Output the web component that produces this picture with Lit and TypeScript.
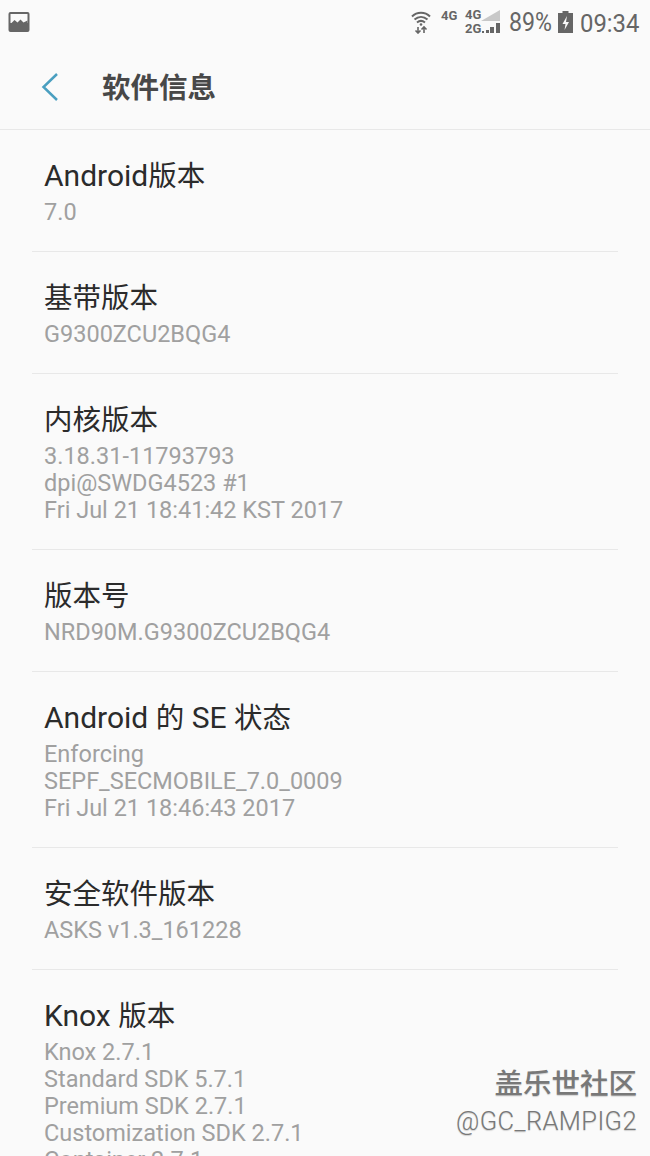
import { LitElement, html, css } from "lit";
import { customElement } from "lit/decorators.js";

const rows: [string, string[]][] = [
  ["Android版本", ["7.0"]],
  ["基带版本", ["G9300ZCU2BQG4"]],
  ["内核版本", ["3.18.31-11793793", "dpi@SWDG4523 #1", "Fri Jul 21 18:41:42 KST 2017"]],
  ["版本号", ["NRD90M.G9300ZCU2BQG4"]],
  ["Android 的 SE 状态", ["Enforcing", "SEPF_SECMOBILE_7.0_0009", "Fri Jul 21 18:46:43 2017"]],
  ["安全软件版本", ["ASKS v1.3_161228"]],
  ["Knox 版本", ["Knox 2.7.1", "Standard SDK 5.7.1", "Premium SDK 2.7.1", "Customization SDK 2.7.1", "Container 2.7.1"]],
];

const splitLatin = (t: string) =>
  t.split(/([A-Za-z ]+)/).filter(Boolean).map((p) =>
    /[A-Za-z ]/.test(p) ? html`<span class="lat">${p}</span>` : p);

@customElement("app-root")
export class AppRoot extends LitElement {
  static styles = css`
    :host {
      display: block;
      position: relative;
      width: 650px;
      height: 1156px;
      overflow: hidden;
      background: #fafafa;
      font-family: Roboto, "Noto Sans CJK SC", sans-serif;
    }
    .status {
      height: 44px;
      display: flex;
      align-items: center;
      padding: 0 11px 0 8px;
      color: #666;
    }
    .status .spacer { flex: 1; }
    .status svg { display: block; flex: none; }
    .pct { font-size: 26px; margin-left: 8px; width: 43px; flex: none; transform: scaleX(.89); transform-origin: left; white-space: nowrap; }
    .time { font-size: 26.5px; margin-left: 7px; width: 59px; flex: none; transform: scaleX(.9); transform-origin: left; white-space: nowrap; }
    .small { font-size: 13px; font-weight: 700; line-height: 12px; width: 16px; white-space: nowrap; }
    .g1 { margin: -12px 0 0 10px; }
    .cluster { position: relative; flex: none; width: 36px; height: 24px; margin: 0 0 0 8px; }
    .cluster .small { position: absolute; left: 0; }
    .cluster .t { top: -1px; }
    .cluster .u { top: 13px; }
    .cluster svg { position: absolute; left: 0; top: 0; }
    .batt { margin-left: 6px; }
    .head {
      height: 86px;
      display: flex;
      align-items: center;
      gap: 43px;
      padding-left: 41px;
      box-sizing: border-box;
      border-bottom: 1px solid #e8e8e8;
    }
    .head h1 {
      margin: 4px 0 0;
      font-size: 28.5px;
      font-weight: 700;
      color: #484848;
      line-height: 36px;
    }
    .list { padding: 0 32px; }
    .row { padding: 29px 12px 25px; border-bottom: 1px solid #e8e8e8; }
    .row:last-child { border-bottom: 0; }
    .title { font-size: 28.5px; height: 36px; line-height: 36px; color: #2b2b2b; margin-bottom: 4px; white-space: pre; }
    .lat { font-size: 30px; line-height: 1; }
    .sub { font-size: 23.5px; line-height: 27px; color: #a0a0a0; white-space: nowrap; }
    .mark {
      position: absolute;
      right: 13px;
      top: 1067px;
      text-align: right;
      color: #787878;
      text-shadow: 0 1px 1px #cfcfcf;
    }
    .mark .a { font-size: 28.5px; line-height: 36px; font-weight: 500; }
    .mark .b { font-size: 25.5px; line-height: 30px; margin-top: 3px; letter-spacing: .4px; font-weight: 300; }
  `;

  render() {
    return html`
      <div class="status">
        <svg width="22" height="22" viewBox="0 0 22 22">
          <rect x="0.5" y="1" width="21" height="20" rx="2" fill="#666"/>
          <rect x="2.500" y="3" width="17" height="9" fill="#fafafa"/>
          <path d="M2.500 13l4-4 3 2.500 3-3 3 3 4-2v5h-17z" fill="#666"/>
        </svg>
        <div class="spacer"></div>
        <svg width="20" height="23" viewBox="0 0 20 23" fill="none" stroke="#666" stroke-width="2">
          <path d="M1 5.500c5-5 13-5 18 0M3.500 8.500c4-3.500 9-3.500 13 0M6 11.500c2.500-2 5.500-2 8 0"/>
          <circle cx="10" cy="13.500" r="1.300" fill="#666" stroke="none"/>
          <path d="M7 16v6M4.500 19.500L7 22l2.500-2.500M13 22v-6M10.500 18.500L13 16l2.500 2.500" stroke-width="1.600"/>
        </svg>
        <div class="small g1">4G</div>
        <div class="cluster">
          <div class="small t">4G</div>
          <div class="small u">2G</div>
          <svg width="36" height="24" viewBox="0 0 36 24">
            <path d="M16 11L35 0v11z" fill="#c8c8c8"/>
            <path d="M17 21h2v2h-2zM21 20h3v3h-3zM25 17h4v6h-4zM31 13h4v10h-4z" fill="#666"/>
          </svg>
        </div>
        <div class="pct">89%</div>
        <svg class="batt" width="15" height="22" viewBox="0 0 15 22">
          <path d="M4.500 0h6v2h4.500v20H0V2h4.500z" fill="#666"/>
          <path d="M9 5L4.500 13h3l-1 6L11 11H8z" fill="#fafafa"/>
        </svg>
        <div class="time">09:34</div>
      </div>
      <div class="head">
        <svg width="18" height="28" viewBox="0 0 18 28" fill="none" stroke="#4a9fc0" stroke-width="2.500">
          <path d="M16 1L2.500 14 16 27"/>
        </svg>
        <h1>软件信息</h1>
      </div>
      <div class="list">
        ${rows.map(([t, subs]) => html`
          <div class="row">
            <div class="title">${splitLatin(t)}</div>
            ${subs.map((s) => html`<div class="sub">${s}</div>`)}
          </div>`)}
      </div>
      <div class="mark">
        <div class="a">盖乐世社区</div>
        <div class="b">@GC_RAMPIG2</div>
      </div>
    `;
  }
}
